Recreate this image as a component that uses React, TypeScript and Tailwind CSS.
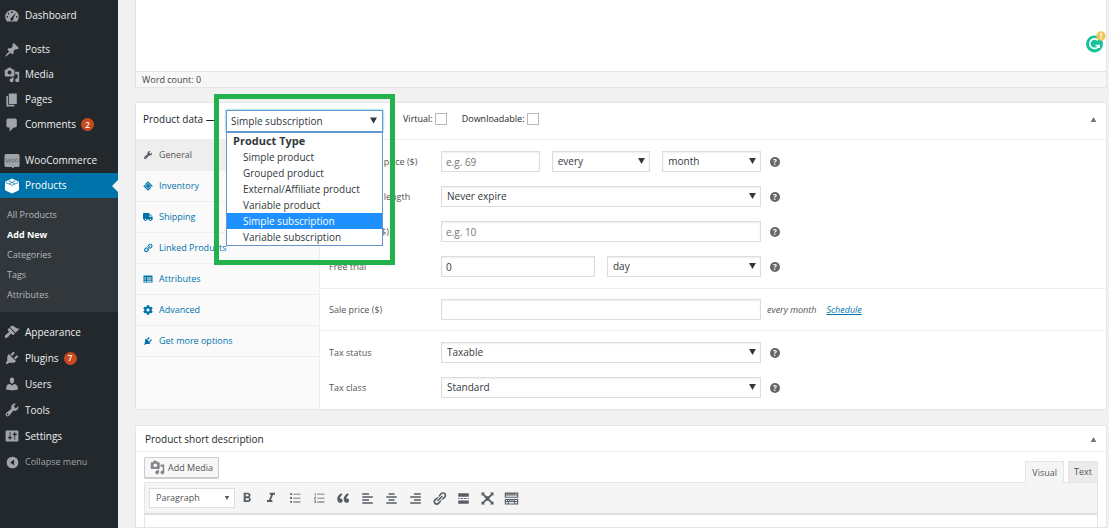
import React from "react";
import { FaCog, FaTruck } from "react-icons/fa";
import { MdFormatBold, MdFormatItalic } from "react-icons/md";
import clsx from "clsx";

// ─── Icons ────────────────────────────────────────────────────────────────────

const ICONS = {
  post: "M10.44 3.02l1.82-1.82 6.36 6.35-1.83 1.82c-1.05-.68-2.48-.57-3.41.36l-.75.75c-.92.93-1.04 2.35-.35 3.41l-1.83 1.82-2.41-2.41-2.8 2.79c-.42.42-3.38 2.71-3.8 2.29s1.86-3.39 2.28-3.81l2.79-2.79L4.1 9.36l1.83-1.82c1.05.69 2.48.57 3.4-.36l.75-.75c.93-.92 1.05-2.35.36-3.41z",
  media: "M13 11V4c0-.55-.45-1-1-1h-1.67L9 1H5L3.67 3H2c-.55 0-1 .45-1 1v7c0 .55.45 1 1 1h10c.55 0 1-.45 1-1zM7 4.5c1.38 0 2.5 1.12 2.5 2.5S8.38 9.5 7 9.5 4.5 8.38 4.5 7 5.62 4.5 7 4.5zM14 6h5v10.5c0 1.38-1.12 2.5-2.5 2.5S14 17.88 14 16.5s1.12-2.5 2.5-2.5c.17 0 .34.02.5.05V9h-3V6zm-4 8.05V13h2v3.5c0 1.38-1.12 2.5-2.5 2.5S7 17.88 7 16.5 8.12 14 9.5 14c.17 0 .34.02.5.05z",
  page: "M6 15V2h10v13H6zm-1 1h8v2H3V5h2v11z",
  comments: "M5 2h9c1.1 0 2 .9 2 2v7c0 1.1-.9 2-2 2h-2l-5 5v-5H5c-1.1 0-2-.9-2-2V4c0-1.1.9-2 2-2z",
  appearance: "M14.48 11.06L7.41 3.99l1.5-1.5c.5-.56 2.3-.47 3.51.32 1.21.8 1.43 1.28 2.91 2.1 1.18.64 2.45 1.26 4.45.85zm-.71.71L6.7 4.7 4.93 6.47c-.39.39-.39 1.02 0 1.41l1.06 1.06c.39.39.39 1.03 0 1.42-.6.6-1.43 1.11-2.21 1.69-.35.26-.7.53-1.01.84C1.43 14.23.4 16.08 1.4 17.07c.99 1 2.84-.03 4.18-1.36.31-.31.58-.66.85-1.02.57-.78 1.08-1.61 1.69-2.21.39-.39 1.02-.39 1.41 0l1.06 1.06c.39.39 1.02.39 1.41 0z",
  plugins: "M13.11 4.36L9.87 7.6 8 5.73l3.24-3.24c.35-.34 1.05-.2 1.56.32.52.51.66 1.21.31 1.55zm-8 1.77l.91-1.12 9.01 9.01-1.19.84c-.71.71-2.63 1.16-3.82 1.16H6.14L4.9 17.26c-.59.59-1.54.59-2.12 0-.59-.58-.59-1.53 0-2.12l1.24-1.24v-3.88c0-1.13.4-3.19 1.09-3.89zm7.26 3.97l3.24-3.24c.34-.35 1.04-.21 1.55.31.52.51.66 1.21.31 1.55l-3.24 3.25z",
  users: "M10 9.25c-2.27 0-2.73-3.44-2.73-3.44C7 4.02 7.82 2 9.97 2c2.16 0 2.98 2.02 2.71 3.81 0 0-.41 3.44-2.68 3.44zm0 2.57L12.72 10c2.39 0 4.52 2.33 4.52 4.53v2.49s-3.65 1.13-7.24 1.13c-3.65 0-7.24-1.13-7.24-1.13v-2.49c0-2.25 1.94-4.48 4.47-4.48z",
  tools: "M16.68 9.77c-1.34 1.34-3.3 1.67-4.95.99l-5.41 6.52c-.99.99-2.59.99-3.58 0s-.99-2.59 0-3.57l6.52-5.42c-.68-1.65-.35-3.61.99-4.95 1.28-1.28 3.12-1.62 4.72-1.06l-2.89 2.89 2.82 2.82 2.86-2.87c.53 1.58.18 3.39-1.08 4.65zM3.81 16.21c.4.39 1.04.39 1.43 0 .4-.4.4-1.04 0-1.43-.39-.4-1.03-.4-1.43 0-.39.39-.39 1.03 0 1.43z",
  settings: "M18 16V4c0-.55-.45-1-1-1H3c-.55 0-1 .45-1 1v12c0 .55.45 1 1 1h14c.55 0 1-.45 1-1zM8 11h1c.55 0 1 .45 1 1s-.45 1-1 1H8v1.5c0 .28-.22.5-.5.5s-.5-.22-.5-.5V13H6c-.55 0-1-.45-1-1s.45-1 1-1h1V5.5c0-.28.22-.5.5-.5s.5.22.5.5V11zm5-2h-1c-.55 0-1-.45-1-1s.45-1 1-1h1V5.500c0-.28.22-.5.5-.5s.5.22.5.5V7h1c.55 0 1 .45 1 1s-.45 1-1 1h-1v5.500c0 .28-.22.5-.5.5s-.5-.22-.5-.5V9z",
  collapse: "M10 1a9 9 0 1 0 0 18a9 9 0 0 0 0-18zM12.500 5.500v9L6.500 10z",
  link: "M17.74 2.76c1.68 1.69 1.68 4.41 0 6.1l-1.53 1.52c-1.12 1.12-2.7 1.47-4.14 1.09l2.62-2.61.76-.77.76-.76c.84-.84.84-2.2 0-3.04-.84-.85-2.2-.85-3.04 0l-.77.76-3.38 3.38c-.37-1.44-.02-3.02 1.1-4.14l1.52-1.53c1.69-1.68 4.42-1.68 6.1 0zM8.59 13.43l5.34-5.34c.42-.42.42-1.1 0-1.52-.44-.43-1.13-.39-1.53 0l-5.33 5.34c-.42.42-.42 1.1 0 1.52.44.43 1.13.39 1.52 0zm-.76 2.29l4.14-4.15c.38 1.44.03 3.02-1.09 4.14l-1.52 1.53c-1.69 1.68-4.41 1.68-6.1 0-1.68-1.68-1.68-4.42 0-6.1l1.53-1.52c1.12-1.12 2.7-1.47 4.14-1.1l-4.14 4.15c-.85.84-.85 2.2 0 3.05.84.84 2.2.84 3.04 0z",
  tickets: "M10 .5L19.500 10 18 11.500c-.8-.5-1.600-.3-2.100.2s-.6 1.300-.1 2.100L10 19.500.5 10 2.200 8.300c.8.5 1.600.4 2.100-.1s.6-1.300.1-2.100zM10 4L4 10l6 6 6-6zM10 5.300l4.700 4.700-4.700 4.700L5.300 10z",
  table: "M1 3h18v14H1zM3 7v2h3V7zm5 0v2h9V7zm-5 4v1.500h3V11zm5 0v1.500h9V11zm-5 3v1.500h3V14zm5 0v1.500h9V14z",
  bullets: "M2 2h3v3H2zM7 3h12v1.300H7zM2 8.500h3v3H2zM7 9.500h12v1.300H7zM2 15h3v3H2zM7 16h12v1.300H7z",
  numbers: "M3 2h1.300v4H3zM7 3h12v1.300H7zM2 8h3v2.500H3v1h2v1H2V10h2V9H2zM7 9.500h12v1.300H7zM2 14h3v4.500H2v-1h2v-.8H2.500v-1H4V15H2zM7 16h12v1.300H7z",
  quote: "M9.49 13.22c0-.74-.2-1.38-.61-1.9-.62-.78-1.83-.88-2.53-.72-.29-1.65 1.11-3.75 2.92-4.65L7.88 4c-2.73 1.3-5.42 4.28-4.96 8.05C3.21 14.43 4.59 16 6.54 16c.85 0 1.56-.25 2.12-.75s.83-1.18.83-2.03zm8.05 0c0-.74-.2-1.38-.61-1.9-.63-.78-1.83-.88-2.53-.72-.29-1.65 1.11-3.75 2.92-4.65L15.93 4c-2.73 1.3-5.41 4.28-4.95 8.05.29 2.38 1.66 3.95 3.61 3.95.85 0 1.56-.25 2.12-.75s.83-1.18.83-2.03z",
  alignLeft: "M12 5V3H3v2h9zm5 4V7H3v2h14zm-5 4v-2H3v2h9zm5 4v-2H3v2h14z",
  alignCenter: "M14 5V3H6v2h8zm3 4V7H3v2h14zm-3 4v-2H6v2h8zm3 4v-2H3v2h14z",
  alignRight: "M17 5V3H8v2h9zm0 4V7H3v2h14zm0 4v-2H8v2h9zm0 4v-2H3v2h14z",
  more: "M3 3h14v4.500H3zM3 9.300h2v1.400H3zM6.500 9.300h3v1.400h-3zM11 9.300h3v1.400h-3zM15.500 9.300H17v1.400h-1.500zM3 12.500h14V17H3z",
  expand: "M2 2h4.500L5.300 3.600 8.500 7h3l3.200-3.400L13.500 2H18v4.500l-1.400-1.200L12.500 9.500v1l4.100 4.200 1.400-1.200V18h-4.500l1.200-1.600-3.200-3.400h-3l-3.200 3.400L6.500 18H2v-4.500l1.400 1.200 4.100-4.200v-1L3.400 5.300 2 6.500z",
  kitchenSink: "M1 2h18v7H1zM2.500 3.500v1H4v-1zm3 0v1H7v-1zm3 0v1H10v-1zm3 0v1H13v-1zm3 0v1h3v-1zM2.500 6v1.500h15V6zM1 10.500h18V18H1zM2.500 12v1.200H4V12zm3 0v1.200H7V12zm3 0v1.200H10V12zm3 0v1.200H13V12zm3 0v1.200h3V12zM2.500 14.800v1.700H5v-1.700zm4 0v1.700h7v-1.700zm8.500 0v1.700h2.500v-1.700z",
};

type IconName = keyof typeof ICONS;

function Icon({ name, className }: { name: IconName; className?: string }) {
  return (
    <svg viewBox="0 0 20 20" fill="currentColor" fillRule="evenodd" className={clsx("shrink-0", className)} aria-hidden="true">
      <path d={ICONS[name]} />
    </svg>
  );
}

function DashboardIcon() {
  return (
    <svg viewBox="0 0 20 20" className="size-4 shrink-0" aria-hidden="true">
      <path d="M3.800 17h12.400a9.200 9.200 0 0 0 2.400-6c0-4.700-3.900-8.500-8.600-8.500S1.400 6.300 1.400 11a9.200 9.200 0 0 0 2.400 6z" fill="#a0a5aa" />
      <g fill="#23282d">
        <circle cx="10" cy="5.200" r="1.100" />
        <circle cx="5.800" cy="7" r="1.100" />
        <circle cx="4" cy="11" r="1.100" />
        <circle cx="16" cy="11" r="1.100" />
        <path d="M14.900 5.700l-3.300 7.600a1.900 1.900 0 1 1-2.400-1.100z" />
      </g>
    </svg>
  );
}

function WooIcon() {
  return (
    <svg viewBox="0 0 16 16" className="size-4 shrink-0" aria-hidden="true">
      <path d="M2 1h12a1.500 1.500 0 0 1 1.500 1.500v10A1.500 1.500 0 0 1 14 14h-4l-1 1.500L7.500 14H2a1.500 1.500 0 0 1-1.500-1.500v-10A1.500 1.500 0 0 1 2 1z" fill="#a0a5aa" />
      <g fill="none" stroke="#6b7176" strokeWidth=".9">
        <path d="M2 5.500l1 4 1.500-3 1 3 1-4" />
        <circle cx="9" cy="7.500" r="1.400" />
        <circle cx="12.500" cy="7.500" r="1.400" />
      </g>
    </svg>
  );
}

function ProductsIcon() {
  return (
    <svg viewBox="0 0 16 16" className="size-4 shrink-0" aria-hidden="true">
      <path d="M8 .5l7 3.200v8.600l-7 3.200-7-3.200V3.700z" fill="#fff" />
      <path d="M1.500 4.500L8 7.300l6.500-2.800M4.500 2.800l6.500 3M11.500 2.800l-6.500 3" fill="none" stroke="#0073aa" strokeWidth=".7" />
    </svg>
  );
}

function GrammarlyBadge() {
  return (
    <svg viewBox="0 0 20 22" className="h-[22px] w-5" role="img" aria-label="Writing assistant">
      <circle cx="8.500" cy="13" r="8.500" fill="#15c39a" />
      <path d="M12 9.300A4.800 4.800 0 1 0 13 14.500H9.500M13 14.500V17" fill="none" stroke="#fff" strokeWidth="1.700" />
      <circle cx="15" cy="5" r="4.700" fill="#f2c55c" />
      <path d="M15 2.200v3.300M15 6.500v1.300" stroke="#fff" strokeWidth="1.400" />
    </svg>
  );
}

function Triangle({ up = false, className }: { up?: boolean; className?: string }) {
  return (
    <svg viewBox="0 0 8 7" fill="currentColor" className={className} aria-hidden="true">
      <path d={up ? "M4 0l4 7H0z" : "M0 0h8L4 7z"} />
    </svg>
  );
}

function HelpTip({ label }: { label: string }) {
  return (
    <button
      type="button"
      aria-label={label}
      className="flex size-[10px] shrink-0 items-center justify-center rounded-full bg-[#666] text-[8px] leading-none font-bold text-white"
    >
      ?
    </button>
  );
}

// ─── Sidebar ──────────────────────────────────────────────────────────────────

interface MenuItemProps {
  label: string;
  icon: React.ReactNode;
  count?: number;
  tall?: boolean;
  current?: boolean;
}

function MenuItem({ label, icon, count, tall, current }: MenuItemProps) {
  return (
    <a
      href="#"
      className={clsx(
        "relative flex items-center gap-[5px] pl-1 text-[10px] font-medium",
        tall ? "h-[26px]" : "h-[25px]",
        current ? "bg-[#0073aa] text-white" : "text-[#eee]"
      )}
    >
      <span className={current ? "text-white" : "text-[#a0a5aa]"}>{icon}</span>
      {label}
      {count && (
        <span className="flex size-[13px] items-center justify-center rounded-full bg-[#ca4a1f] text-[8px] leading-none font-semibold text-white">
          {count}
        </span>
      )}
      {current && (
        <span className="absolute top-1/2 right-0 -translate-y-1/2 border-y-6 border-r-6 border-y-transparent border-r-[#f1f1f1]" />
      )}
    </a>
  );
}

const SUBMENU = ["All Products", "Add New", "Categories", "Tags", "Attributes"];

function Sidebar() {
  return (
    <nav aria-label="Main menu" className="w-[118px] shrink-0 bg-[#23282d] pt-[3px]">
      <MenuItem label="Dashboard" icon={<DashboardIcon />} />
      <div className="mt-[9px]">
        <MenuItem label="Posts" icon={<Icon name="post" className="size-4" />} />
        <MenuItem label="Media" icon={<Icon name="media" className="size-4" />} />
        <MenuItem label="Pages" icon={<Icon name="page" className="size-4" />} />
        <MenuItem label="Comments" icon={<Icon name="comments" className="size-4" />} count={2} />
      </div>
      <div className="mt-[11px]">
        <MenuItem label="WooCommerce" icon={<WooIcon />} />
        <MenuItem label="Products" icon={<ProductsIcon />} current />
        <ul className="bg-[#32373c] py-[7px]">
          {SUBMENU.map((item) => (
            <li key={item}>
              <a
                href="#"
                className={clsx(
                  "flex h-5 items-center pl-[7px] text-[9px]",
                  item === "Add New" ? "font-bold text-white" : "text-[#b4b9be]"
                )}
              >
                {item}
              </a>
            </li>
          ))}
        </ul>
      </div>
      <div className="mt-[7px]">
        <MenuItem tall label="Appearance" icon={<Icon name="appearance" className="size-4" />} />
        <MenuItem tall label="Plugins" icon={<Icon name="plugins" className="size-4" />} count={7} />
        <MenuItem tall label="Users" icon={<Icon name="users" className="size-4" />} />
        <MenuItem tall label="Tools" icon={<Icon name="tools" className="size-4" />} />
        <MenuItem tall label="Settings" icon={<Icon name="settings" className="size-4" />} />
        <button type="button" className="flex h-[26px] items-center gap-[5px] pl-1 text-[9px] text-[#a0a5aa]">
          <span className="flex size-4 items-center justify-center">
            <Icon name="collapse" className="size-[13px]" />
          </span>
          Collapse menu
        </button>
      </div>
    </nav>
  );
}

// ─── Form controls ────────────────────────────────────────────────────────────

const FIELD = "block h-[21px] w-full border border-[#ddd] bg-white text-[10px] text-[#32373c] shadow-[inset_0_1px_2px_rgba(0,0,0,0.07)] outline-none";

function TextBox(props: React.InputHTMLAttributes<HTMLInputElement>) {
  return (
    <div className="min-w-0 flex-1">
      <input type="text" className={clsx(FIELD, "px-1 placeholder:text-[#757575]")} {...props} />
    </div>
  );
}

function Select({ id, label, value }: { id?: string; label?: string; value: string }) {
  return (
    <div className="relative min-w-0 flex-1">
      <select id={id} aria-label={label} defaultValue={value} className={clsx(FIELD, "appearance-none px-[5px]")}>
        <option>{value}</option>
      </select>
      <Triangle className="pointer-events-none absolute top-[7px] right-[5px] h-[6px] w-[7px] text-[#32373c]" />
    </div>
  );
}

interface RowProps {
  label: string;
  htmlFor: string;
  after?: React.ReactNode;
  children: React.ReactNode;
}

function Row({ label, htmlFor, after, children }: RowProps) {
  return (
    <div className="flex h-[35px] items-center pl-[9px] text-[9px]">
      <label htmlFor={htmlFor} className="w-28 shrink-0 text-[#555]">
        {label}
      </label>
      <div className="flex w-80 gap-3">{children}</div>
      {after ?? (
        <span className="flex pl-[9px]">
          <HelpTip label={`Help: ${label}`} />
        </span>
      )}
    </div>
  );
}

// ─── Product data ─────────────────────────────────────────────────────────────

const TABS: { label: string; icon: React.ReactNode }[] = [
  { label: "General", icon: <Icon name="tools" className="size-[10px]" /> },
  { label: "Inventory", icon: <Icon name="tickets" className="size-[10px]" /> },
  { label: "Shipping", icon: <FaTruck className="size-[10px]" /> },
  { label: "Linked Products", icon: <Icon name="link" className="size-[10px]" /> },
  { label: "Attributes", icon: <Icon name="table" className="size-[10px]" /> },
  { label: "Advanced", icon: <FaCog className="size-[10px]" /> },
  { label: "Get more options", icon: <Icon name="plugins" className="size-[10px]" /> },
];

const PRODUCT_TYPES = [
  "Simple product",
  "Grouped product",
  "External/Affiliate product",
  "Variable product",
  "Simple subscription",
  "Variable subscription",
];

function ProductTypeSelect() {
  return (
    <div className="relative z-10 mt-1 w-[157px]">
      <select
        id="product-type"
        aria-label="Product type"
        defaultValue="Simple subscription"
        className="block h-[22px] w-full appearance-none border border-[#5b9dd9] bg-white px-1 text-[10px] text-[#32373c] shadow-[0_0_2px_rgba(30,140,190,0.8)] outline-none"
      >
        {PRODUCT_TYPES.map((type) => (
          <option key={type}>{type}</option>
        ))}
      </select>
      <Triangle className="pointer-events-none absolute top-[7px] right-[6px] h-[7px] w-[7px] text-[#32373c]" />

      {/* Open option list */}
      <div role="listbox" aria-label="Product type options" className="absolute top-full left-0 w-full border border-[#6d93cf] bg-white text-[10px] leading-4 text-[#32373c]">
        <div className="pl-[6px] text-[11px] leading-4 font-bold">Product Type</div>
        {PRODUCT_TYPES.map((type) => (
          <div
            key={type}
            role="option"
            aria-selected={type === "Simple subscription"}
            className={clsx("pl-4 whitespace-nowrap", type === "Simple subscription" && "bg-[#1e90ff] text-white")}
          >
            {type}
          </div>
        ))}
      </div>

      {/* Highlight frame */}
      <div className="pointer-events-none absolute -top-4 -left-3 h-[171px] w-[181px] border-5 border-[#22b14c]" />
    </div>
  );
}

function ProductData() {
  return (
    <section className="mt-[14px] border border-[#e5e5e5] bg-white">
      <header className="flex h-[37px] items-center border-b border-[#eee] pr-[9px] pb-1 pl-[7px]">
        <h2 className="w-[83px] text-[10px] whitespace-nowrap text-[#23282d]">Product data —</h2>
        <ProductTypeSelect />
        <label className="ml-5 flex items-center gap-[2px] text-[9px] text-[#23282d]">
          Virtual:
          <input type="checkbox" className="size-3 appearance-none border border-[#b4b9be] bg-white" />
        </label>
        <label className="ml-[15px] flex items-center gap-[2px] text-[9px] text-[#23282d]">
          Downloadable:
          <input type="checkbox" className="size-3 appearance-none border border-[#b4b9be] bg-white" />
        </label>
        <button type="button" aria-label="Toggle product data" className="ml-auto text-[#72777c]">
          <Triangle up className="h-[5px] w-[7px]" />
        </button>
      </header>

      <div className="flex">
        <ul className="w-[184px] shrink-0 border-r border-[#eee] bg-[#fafafa]">
          {TABS.map(({ label, icon }, i) => (
            <li key={label}>
              <a
                href="#"
                className={clsx(
                  "flex h-[31px] items-center gap-[6px] border-b border-[#eee] pl-[7px] text-[9px] font-medium",
                  i === 0 ? "bg-[#eee] text-[#555]" : "text-[#0073aa]"
                )}
              >
                {icon}
                {label}
              </a>
            </li>
          ))}
        </ul>

        <div className="min-w-0 flex-1">
          <div className="border-b border-[#eee] py-1">
            <Row label="Subscription price ($)" htmlFor="price">
              <TextBox id="price" placeholder="e.g. 69" />
              <Select label="Billing interval" value="every" />
              <Select label="Billing period" value="month" />
            </Row>
            <Row label="Subscription length" htmlFor="length">
              <Select id="length" value="Never expire" />
            </Row>
            <Row label="Sign-up fee ($)" htmlFor="fee">
              <TextBox id="fee" placeholder="e.g. 10" />
            </Row>
            <Row label="Free trial" htmlFor="trial">
              <TextBox id="trial" defaultValue="0" />
              <Select label="Trial period" value="day" />
            </Row>
          </div>
          <div className="border-b border-[#eee] py-[3px]">
            <Row
              label="Sale price ($)"
              htmlFor="sale"
              after={
                <span className="flex gap-[10px] pl-[6px] italic text-[#555]">
                  every month
                  <a href="#" className="text-[#0073aa] underline">
                    Schedule
                  </a>
                </span>
              }
            >
              <TextBox id="sale" />
            </Row>
          </div>
          <div className="py-1">
            <Row label="Tax status" htmlFor="tax-status">
              <Select id="tax-status" value="Taxable" />
            </Row>
            <Row label="Tax class" htmlFor="tax-class">
              <Select id="tax-class" value="Standard" />
            </Row>
          </div>
        </div>
      </div>
    </section>
  );
}

// ─── Short description ────────────────────────────────────────────────────────

const TOOLS: { label: string; icon: React.ReactNode }[] = [
  { label: "Bold", icon: <MdFormatBold className="size-4" /> },
  { label: "Italic", icon: <MdFormatItalic className="size-4" /> },
  { label: "Bulleted list", icon: <Icon name="bullets" className="size-3" /> },
  { label: "Numbered list", icon: <Icon name="numbers" className="size-3" /> },
  { label: "Blockquote", icon: <Icon name="quote" className="size-4" /> },
  { label: "Align left", icon: <Icon name="alignLeft" className="size-[15px]" /> },
  { label: "Align center", icon: <Icon name="alignCenter" className="size-[15px]" /> },
  { label: "Align right", icon: <Icon name="alignRight" className="size-[15px]" /> },
  { label: "Insert link", icon: <Icon name="link" className="size-[15px]" /> },
  { label: "Read more tag", icon: <Icon name="more" className="size-[15px]" /> },
  { label: "Fullscreen", icon: <Icon name="expand" className="size-[15px]" /> },
  { label: "Toolbar toggle", icon: <Icon name="kitchenSink" className="size-[15px]" /> },
];

function ShortDescription() {
  return (
    <section className="mt-[15px] flex flex-1 flex-col border border-[#e5e5e5] bg-white">
      <header className="flex h-[26px] items-center justify-between border-b border-[#eee] px-[9px] pt-[2px]">
        <h2 className="text-[10px] text-[#23282d]">Product short description</h2>
        <button type="button" aria-label="Toggle short description" className="text-[#72777c]">
          <Triangle up className="h-[5px] w-[7px]" />
        </button>
      </header>

      <div className="flex flex-1 flex-col px-2 pt-[5px]">
        <div className="flex items-end justify-between">
          <button
            type="button"
            className="mb-1 flex h-[21px] items-center gap-[3px] rounded-xs border border-[#ccc] bg-[#f7f7f7] px-[5px] text-[9px] font-medium text-[#555] shadow-[0_1px_0_#ccc]"
          >
            <Icon name="media" className="size-[15px] text-[#82878c]" />
            Add Media
          </button>
          <div role="tablist" aria-label="Editor mode" className="flex gap-1 text-[9px] font-medium text-[#555]">
            <button type="button" role="tab" aria-selected="true" className="relative z-1 -mb-px h-[22px] border border-b-0 border-[#e5e5e5] bg-[#f5f5f5] px-[6px]">
              Visual
            </button>
            <button type="button" role="tab" aria-selected="false" className="h-[21px] border border-b-0 border-[#e5e5e5] bg-[#ebebeb] px-[5px]">
              Text
            </button>
          </div>
        </div>

        <div className="flex-1 border border-b-0 border-[#e5e5e5]">
          <div className="flex h-8 items-center gap-[2px] border-b-2 border-[#ddd] bg-[#f5f5f5] pl-1">
            <div className="relative">
              <select aria-label="Text format" defaultValue="Paragraph" className="block h-5 w-[86px] appearance-none border border-[#ddd] bg-white pl-[6px] text-[9px] text-[#555]">
                <option>Paragraph</option>
              </select>
              <Triangle className="pointer-events-none absolute top-2 right-[5px] h-1 w-[6px] text-[#555d66]" />
            </div>
            <div className="flex gap-1 text-[#555d66]">
              {TOOLS.map(({ label, icon }) => (
                <button key={label} type="button" aria-label={label} className="flex size-5 items-center justify-center">
                  {icon}
                </button>
              ))}
            </div>
          </div>
        </div>
      </div>
    </section>
  );
}

// ─── Page ─────────────────────────────────────────────────────────────────────

export default function App() {
  return (
    <div className="flex h-screen overflow-hidden bg-[#f1f1f1] font-['Open_Sans','Noto_Sans',sans-serif]">
      <Sidebar />
      <main className="flex min-w-0 flex-1 flex-col pr-[2px] pl-[17px]">
        <section className="border border-t-0 border-[#e5e5e5] bg-white">
          <div className="flex h-[71px] items-end justify-end pb-[18px]">
            <GrammarlyBadge />
          </div>
          <div className="flex h-4 items-center border-t border-[#e5e5e5] bg-[#f7f7f7] pl-[6px] text-[9px] text-[#444]">Word count: 0</div>
        </section>
        <ProductData />
        <ShortDescription />
      </main>
    </div>
  );
}
